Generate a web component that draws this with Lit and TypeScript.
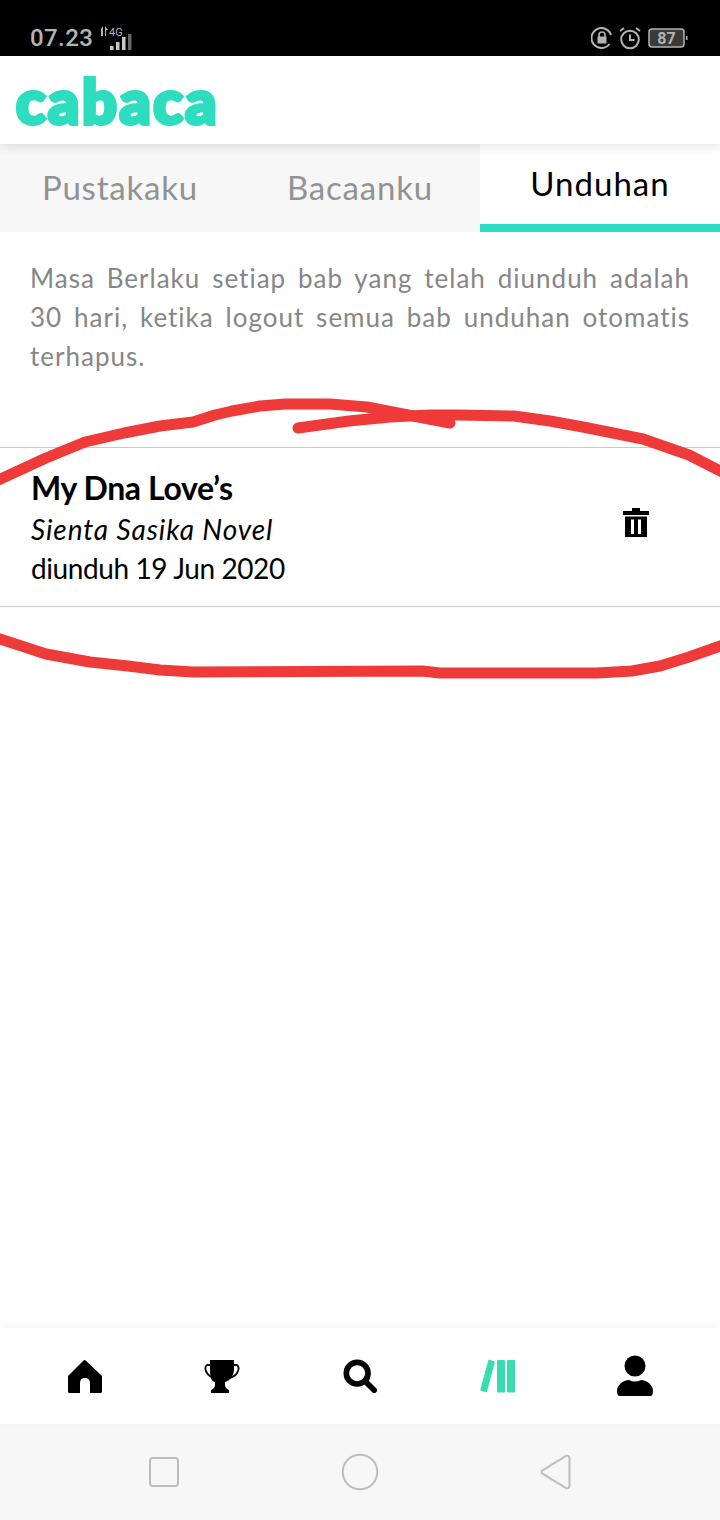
import { LitElement, html, css, svg } from "lit";
import { customElement } from "lit/decorators.js";

@customElement("app-root")
export class AppRoot extends LitElement {
  static styles = css`
    :host { display: block; position: relative; width: 720px; height: 1520px; overflow: hidden; background: #fff; font-family: Lato, "Noto Sans", sans-serif; color: #000; }
    .page { display: flex; flex-direction: column; height: 1520px; }
    .status { height: 56px; flex: none; background: #000; color: #b4b4b4; display: flex; align-items: center; justify-content: space-between; padding: 20px 32px 0 30px; box-sizing: border-box; font-family: Roboto, sans-serif; }
    .time { font-size: 24px; font-weight: 500; letter-spacing: 0.4px; line-height: 1; }
    .left, .right { display: flex; align-items: center; }
    .net { margin-left: 2px; }
    .right { gap: 7px; }
    .lock { margin-right: -2px; }
    .alarm { margin-right: -1px; }
    .head { height: 88px; flex: none; background: #fff; display: flex; align-items: center; padding-left: 16px; box-sizing: border-box; box-shadow: 0 2px 10px rgba(0,0,0,.12); position: relative; z-index: 1; }
    .logo { font-family: Lato, sans-serif; font-weight: 900; font-size: 61px; line-height: 1; color: #2edcbf; -webkit-text-stroke: 4px #2edcbf; letter-spacing: 2.6px; paint-order: stroke fill; margin-top: 1px; }
    .tabs { height: 88px; flex: none; display: grid; grid-template-columns: repeat(3, 1fr); background: #f7f7f7; font-size: 33px; letter-spacing: 0.8px; color: #929292; }
    .tab { display: flex; align-items: center; justify-content: center; padding-bottom: 2px; box-sizing: border-box; }
    .tab.on { background: #fff; color: #000; border-bottom: 8px solid #2edcbf; padding-bottom: 2px; letter-spacing: 1px; }
    .note { margin: 0; padding: 27px 30px 0; height: 215px; flex: none; box-sizing: border-box; font-size: 26px; line-height: 39px; letter-spacing: 1px; color: #868686; text-align: justify; }
    .row { flex: none; height: 160px; box-sizing: border-box; border-top: 1px solid #c9c9c9; border-bottom: 1px solid #c9c9c9; display: flex; align-items: flex-start; justify-content: space-between; padding: 19px 71px 0 31px; }
    .title { font-size: 32px; font-weight: 700; line-height: 42px; letter-spacing: -0.4px; }
    .author { font-size: 28px; font-style: italic; line-height: 39px; margin-top: 1px; letter-spacing: 0.9px; }
    .date { font-size: 28px; line-height: 39px; letter-spacing: -0.4px; }
    .trash { margin-top: 39px; display: block; }
    .fill { flex: 1; }
    .nav { flex: none; height: 96px; display: grid; grid-template-columns: repeat(5, 1fr); padding: 0 16px; background: #fff; box-shadow: 0 -3px 8px rgba(0,0,0,.05); position: relative; }
    .nav div { display: flex; align-items: center; justify-content: center; }
    .sys { flex: none; height: 96px; background: #f7f7f7; display: grid; grid-template-columns: repeat(3, 196px); justify-content: center; }
    .sys div { display: flex; align-items: center; justify-content: center; }
    .scribble { position: absolute; left: 0; top: 0; pointer-events: none; }
  `;

  private statusNet() {
    return html`<svg class="net" width="42" height="30" viewBox="0 0 42 30">
      <path d="M6 6l2-3v10H6zM10 3l3 4h-2v6h-1z" fill="#b4b4b4"/>
      <text x="14" y="13" font-size="11" fill="#b4b4b4" font-family="Roboto, sans-serif">4G</text>
      <rect x="15" y="23" width="3.500" height="4" fill="#c8c8c8"/>
      <rect x="21" y="19" width="3.500" height="8" fill="#c8c8c8"/>
      <rect x="27" y="14" width="3.500" height="13" fill="#c8c8c8"/>
      <rect x="33" y="11" width="3.500" height="16" fill="#666"/>
    </svg>`;
  }

  render() {
    return html`
      <div class="page">
        <div class="status">
          <div class="left"><span class="time">07.23</span>${this.statusNet()}</div>
          <div class="right">
            <svg class="lock" width="22" height="22" viewBox="0 0 22 22" fill="none" stroke="#b4b4b4" stroke-width="2">
              <path d="M18.500 17A10 10 0 1 1 20 8"/>
              <rect x="6.500" y="9.500" width="9" height="7" fill="#b4b4b4" stroke="none"/>
              <path d="M8 10V8a3 3 0 0 1 6 0v2" stroke-width="1.600"/>
            </svg>
            <svg class="alarm" width="24" height="24" viewBox="0 0 24 24" fill="none" stroke="#b4b4b4" stroke-width="2">
              <circle cx="12" cy="13.500" r="8.800"/><path d="M12 8.500v5.500h4.500"/><path d="M2 5l4-3M22 5l-4-3"/>
            </svg>
            <svg width="40" height="20" viewBox="0 0 40 20">
              <rect x="1" y="1" width="35" height="18" rx="3" fill="#3a3a3a" stroke="#b4b4b4" stroke-width="1.500"/>
              <rect x="38" y="8" width="1.500" height="4" fill="#b4b4b4"/>
              <text x="18.500" y="15.500" font-size="16" font-weight="700" text-anchor="middle" fill="#b4b4b4" font-family="Roboto, sans-serif">87</text>
            </svg>
          </div>
        </div>
        <div class="head"><span class="logo">cabaca</span></div>
        <div class="tabs">
          <div class="tab">Pustakaku</div>
          <div class="tab">Bacaanku</div>
          <div class="tab on">Unduhan</div>
        </div>
        <p class="note">Masa Berlaku setiap bab yang telah diunduh adalah 30 hari, ketika logout semua bab unduhan otomatis terhapus.</p>
        <div class="row">
          <div>
            <div class="title">My Dna Love’s</div>
            <div class="author">Sienta Sasika Novel</div>
            <div class="date">diunduh 19 Jun 2020</div>
          </div>
          <svg class="trash" width="26" height="32" viewBox="0 0 26 32">
            <path d="M0 5h26v4H0zM9 2h8v3H9z"/>
            <path fill-rule="evenodd" d="M2 10.500h22V31H2zM8 13.500v14.500h3V13.500zM15 13.500v14.500h3V13.500z"/>
          </svg>
        </div>
        <div class="fill"></div>
        <div class="nav">
          <div><svg width="36" height="34" viewBox="0 0 36 34"><path d="M17.500 1q.7 0 1.200.6L35 17v15.500q0 1.500-1.500 1.500H23V24q0-5-5-5t-5 5v10H2.500Q1 34 1 32.500V17L16.500 1.600q.4-.6 1-.6z"/></svg></div>
          <div><svg width="36" height="34" viewBox="0 0 36 34">
            <path d="M7 1h24v9c0 8-5 12-9 13v3c0 3 2 4 4 5v3H8v-3c2-1 4-2 4-5v-3C8 22 7 18 7 10z" transform="translate(-1 0)"/>
            <path d="M7 6H3C0 8 1 16 10 19M29 6h4c3 2 2 10-7 13" fill="none" stroke="#000" stroke-width="1.800"/>
          </svg></div>
          <div><svg width="34" height="34" viewBox="0 0 36 36" fill="none" stroke="#000">
            <circle cx="15" cy="15" r="11.500" stroke-width="6"/><path d="M24 24l9 9" stroke-width="6" stroke-linecap="round"/>
          </svg></div>
          <div><svg width="36" height="34" viewBox="0 0 36 34" fill="#39dbb0">
            <path d="M9.500.8l4.600 1.400q1 .3.700 1.200L7 32.500q-.3 1-1.200.7L1 31.700q-1-.3-.7-1.200L8.300 1.500q.3-1 1.200-.7z"/>
            <rect x="17" y="1" width="8" height="32.500" rx="1"/><rect x="27" y="1" width="8" height="32.500" rx="1"/>
          </svg></div>
          <div><svg width="36" height="42" viewBox="0 0 36 42">
            <circle cx="18" cy="11" r="10.500"/><path d="M2 41q-2-1-2-5c0-6 6-11 12-11 4 2 8 2 12 0 6 0 12 5 12 11q0 4-2 5z"/>
          </svg></div>
        </div>
        <div class="sys">
          <div><svg width="32" height="32" viewBox="0 0 32 32"><rect x="2" y="2" width="28" height="28" rx="3" fill="none" stroke="#bdbdbd" stroke-width="2"/></svg></div>
          <div><svg width="38" height="38" viewBox="0 0 38 38"><circle cx="19" cy="19" r="17.300" fill="none" stroke="#bdbdbd" stroke-width="2"/></svg></div>
          <div><svg width="32" height="36" viewBox="0 0 32 36"><path d="M2.500 16.300L26 2q3-1 3.500 2v28q-.5 3-3.500 2L2.500 19.700q-2-1.700 0-3.400z" fill="none" stroke="#bdbdbd" stroke-width="2"/></svg></div>
        </div>
      </div>
      <svg class="scribble" width="720" height="1520" viewBox="0 0 720 1520" fill="none" stroke="#ef3a3a" stroke-width="11" stroke-linecap="round" stroke-linejoin="round">
        ${svg`<path d="M-6 482L46 458L85 442L124 433L160 426L193 422L215 415L232 411L260 406L285 404L330 404L367 407L413 416L450 423"/>
        <path d="M298 428L349 421L390 417L430 415L459 415L514 416L550 421L583 427L643 439L689 455L726 474"/>
        <path d="M-6 637L46 654L90 662L128 666L160 670L193 672L422 671L440 673L597 673L632 671L660 666L689 657L726 644"/>`}
      </svg>
    `;
  }
}
